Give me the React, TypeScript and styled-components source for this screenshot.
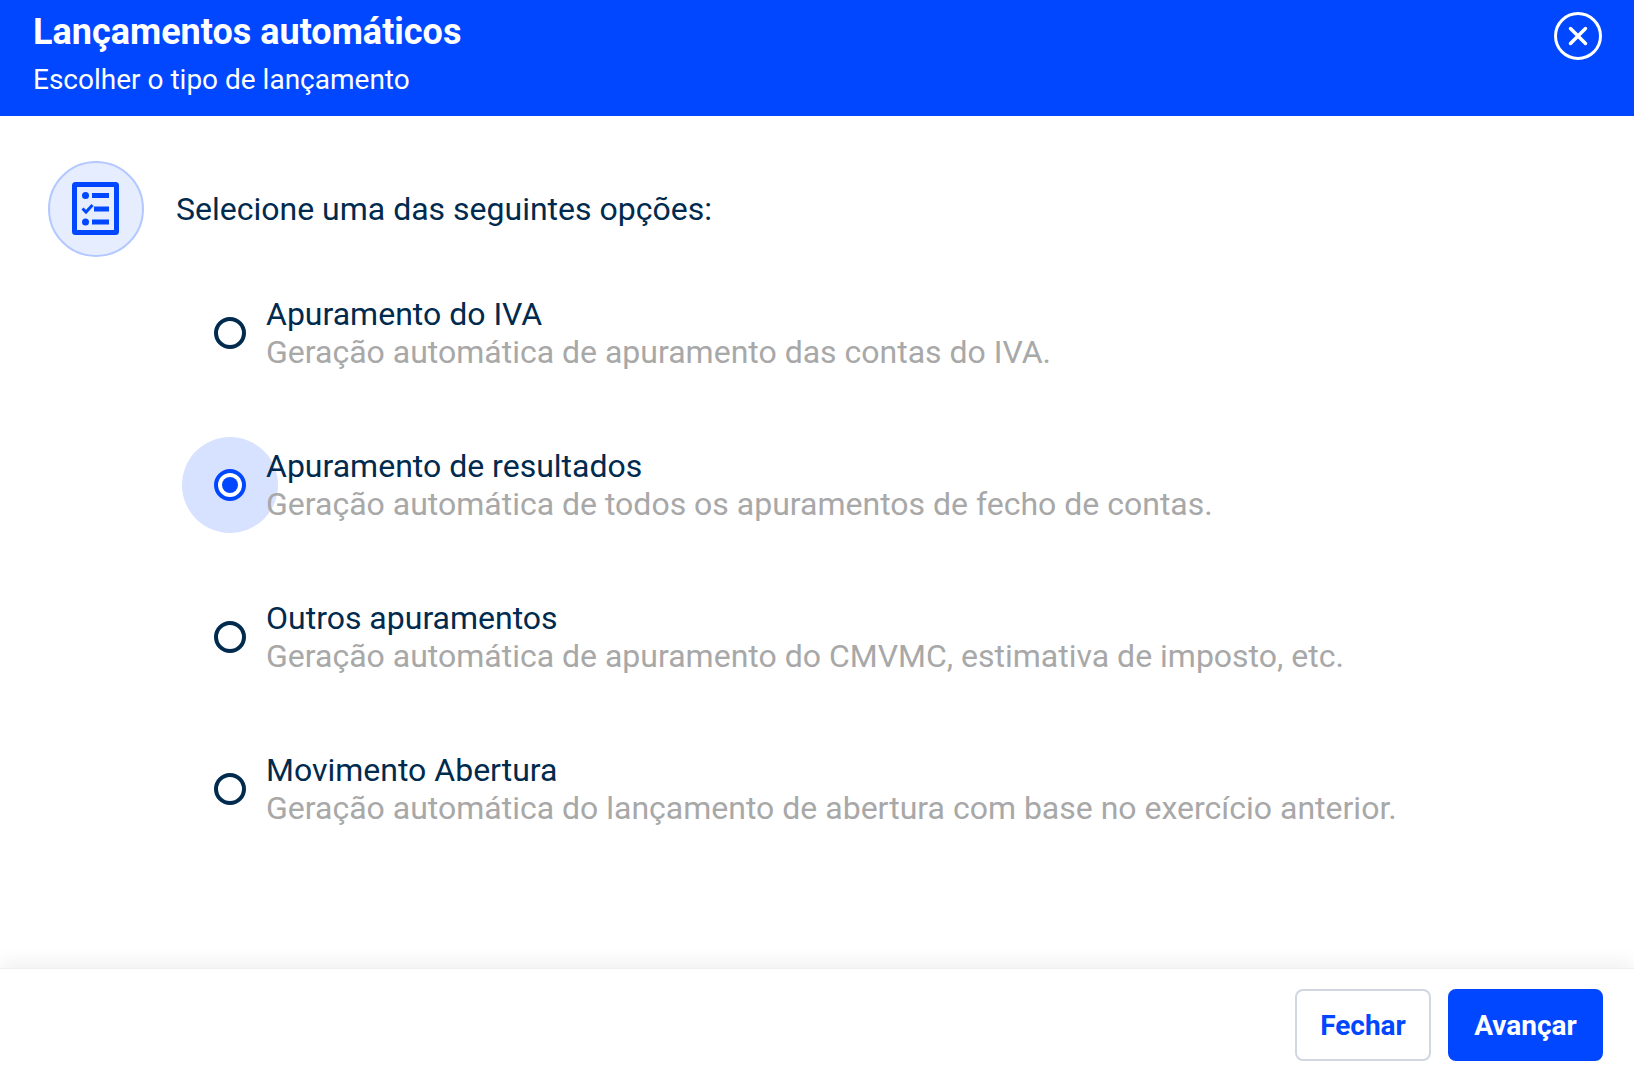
import styled, { createGlobalStyle } from "styled-components"

const GlobalStyle = createGlobalStyle`
  html, body {
    margin: 0;
    padding: 0;
    background: #fff;
    font-family: Roboto, "Liberation Sans", sans-serif;
  }
`

const Dialog = styled.div`
  width: 1634px;
  height: 1070px;
  display: flex;
  flex-direction: column;
  overflow: hidden;
  background: #fff;
`

const Header = styled.header`
  height: 116px;
  flex: none;
  box-sizing: border-box;
  padding: 12px 32px 0 33px;
  background: #0047ff;
  color: #fff;
  display: flex;
  justify-content: space-between;
  align-items: flex-start;
`

const Title = styled.h1`
  margin: 0;
  font-size: 36px;
  line-height: 40px;
  font-weight: 700;
`

const Subtitle = styled.p`
  margin: 10px 0 0;
  font-size: 28px;
  line-height: 36px;
  font-weight: 400;
`

const CloseButton = styled.button`
  width: 48px;
  height: 48px;
  padding: 0;
  border: 0;
  background: none;
  display: block;
`

const Body = styled.main`
  flex: 1;
  padding: 45px 0 0 48px;
`

const Intro = styled.div`
  display: flex;
  align-items: center;
  gap: 32px;
`

const IconCircle = styled.div`
  width: 96px;
  height: 96px;
  box-sizing: border-box;
  border: 2px solid #b3c8ff;
  border-radius: 50%;
  background: #e6edff;
  display: flex;
  align-items: center;
  justify-content: center;
`

const IconSvg = styled.svg`
  display: block;
  margin: 0 1px 1px 0;
`

const Prompt = styled.p`
  margin: 0;
  font-size: 32px;
  line-height: 40px;
  color: #002a4e;
`

const Options = styled.div`
  margin: 0 0 0 134px;
  display: flex;
  flex-direction: column;
`

const Option = styled.label`
  height: 152px;
  display: flex;
  align-items: center;
`

const RadioArea = styled.span<{ $checked?: boolean }>`
  width: 96px;
  height: 96px;
  margin-right: -12px;
  flex: none;
  border-radius: 50%;
  background: ${({ $checked }) => ($checked ? "#d6e2ff" : "transparent")};
  display: flex;
  align-items: center;
  justify-content: center;
`

const RadioDot = styled.span<{ $checked?: boolean }>`
  width: 32px;
  height: 32px;
  box-sizing: border-box;
  border-radius: 50%;
  border: 4px solid ${({ $checked }) => ($checked ? "#0047ff" : "#002a4e")};
  background: #fff;
  display: flex;
  align-items: center;
  justify-content: center;

  &::after {
    content: "";
    display: ${({ $checked }) => ($checked ? "block" : "none")};
    width: 16px;
    height: 16px;
    border-radius: 50%;
    background: #0047ff;
  }
`

const OptionText = styled.span`
  position: relative;
  display: flex;
  flex-direction: column;
`

const OptionTitle = styled.span`
  font-size: 32px;
  line-height: 38px;
  color: #002a4e;
`

const OptionHint = styled.span`
  font-size: 32px;
  line-height: 38px;
  color: #a8a8a8;
`

const Footer = styled.footer`
  height: 102px;
  flex: none;
  box-sizing: border-box;
  padding: 20px 31px 0 0;
  display: flex;
  justify-content: flex-end;
  gap: 17px;
  background: #fff;
  border-top: 1px solid #f0f0f0;
  box-shadow: 0 -8px 16px rgba(0, 0, 0, 0.05);
`

const Button = styled.button<{ $primary?: boolean; $width: number }>`
  width: ${({ $width }) => $width}px;
  height: 72px;
  box-sizing: border-box;
  padding: 0;
  border-radius: 8px;
  border: 2px solid ${({ $primary }) => ($primary ? "#0047ff" : "#d0d7e2")};
  background: ${({ $primary }) => ($primary ? "#0047ff" : "#fff")};
  color: ${({ $primary }) => ($primary ? "#fff" : "#0047ff")};
  font-family: inherit;
  font-size: 28px;
  font-weight: 700;
`

const options = [
  { title: "Apuramento do IVA", hint: "Geração automática de apuramento das contas do IVA." },
  { title: "Apuramento de resultados", hint: "Geração automática de todos os apuramentos de fecho de contas.", checked: true },
  { title: "Outros apuramentos", hint: "Geração automática de apuramento do CMVMC, estimativa de imposto, etc." },
  { title: "Movimento Abertura", hint: "Geração automática do lançamento de abertura com base no exercício anterior." },
]

function ChecklistIcon() {
  return (
    <IconSvg width="47" height="53" viewBox="0 0 47 53" fill="none">
      <rect x="2.5" y="2.5" width="42" height="48" rx="1" stroke="#0047ff" strokeWidth="5" />
      <circle cx="13.5" cy="13.5" r="3.5" fill="#0047ff" />
      <rect x="20" y="11" width="17" height="5" fill="#0047ff" />
      <path d="M10.5 26.5l3.5 3.5 6.5-7" stroke="#0047ff" strokeWidth="3" />
      <rect x="22" y="24.5" width="15" height="5" fill="#0047ff" />
      <circle cx="13.5" cy="40" r="3.5" fill="#0047ff" />
      <rect x="20" y="37.5" width="17" height="5" fill="#0047ff" />
    </IconSvg>
  )
}

function CloseIcon() {
  return (
    <svg width="48" height="48" viewBox="0 0 48 48" fill="none" stroke="#fff" strokeWidth="3" strokeLinecap="round">
      <circle cx="24" cy="24" r="22.5" />
      <path d="M16.5 16.5l15 15M31.5 16.5l-15 15" strokeWidth="3.5" />
    </svg>
  )
}

export default function App() {
  return (
    <Dialog>
      <GlobalStyle />
      <Header>
        <div>
          <Title>Lançamentos automáticos</Title>
          <Subtitle>Escolher o tipo de lançamento</Subtitle>
        </div>
        <CloseButton aria-label="Fechar">
          <CloseIcon />
        </CloseButton>
      </Header>
      <Body>
        <Intro>
          <IconCircle>
            <ChecklistIcon />
          </IconCircle>
          <Prompt>Selecione uma das seguintes opções:</Prompt>
        </Intro>
        <Options>
          {options.map((o) => (
            <Option key={o.title}>
              <RadioArea $checked={o.checked}>
                <RadioDot $checked={o.checked} />
              </RadioArea>
              <OptionText>
                <OptionTitle>{o.title}</OptionTitle>
                <OptionHint>{o.hint}</OptionHint>
              </OptionText>
            </Option>
          ))}
        </Options>
      </Body>
      <Footer>
        <Button $width={136}>Fechar</Button>
        <Button $primary $width={155}>Avançar</Button>
      </Footer>
    </Dialog>
  )
}
